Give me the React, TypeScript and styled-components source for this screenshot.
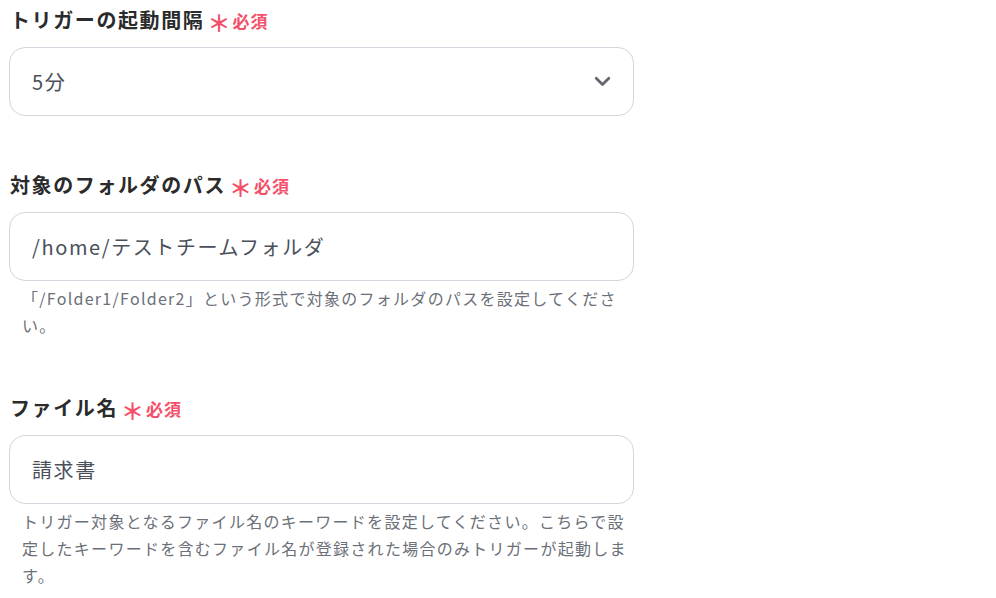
import React from "react";
import styled, { createGlobalStyle } from "styled-components";

const Global = createGlobalStyle`
  html, body { margin: 0; padding: 0; background: #ffffff; }
  body { font-family: "Noto Sans CJK JP", "Noto Sans", sans-serif; }
`;

const Form = styled.div`
  display: flex;
  flex-direction: column;
  gap: 54px;
  padding: 5px 0 0 9px;
  width: 625px;
`;

const Field = styled.div`
  display: flex;
  flex-direction: column;
`;

const Label = styled.div`
  display: flex;
  align-items: center;
  height: 28px;
  margin-bottom: 14px;
  padding-left: 1px;
  font-size: 20px;
  font-weight: 700;
  letter-spacing: 0.08em;
  color: #2b2b2b;
`;

const Asterisk = styled.span`
  color: #f4506a;
  font-family: "Noto Sans CJK JP", sans-serif;
  font-size: 23px;
  font-weight: 700;
  letter-spacing: 0;
  line-height: 1;
  margin: 0 2px 0 3px;
  transform: translateY(3px);
`;

const Required = styled.span`
  color: #f4506a;
  font-size: 17px;
  font-weight: 700;
  letter-spacing: 0.06em;
  transform: translateY(1px);
`;

const Box = styled.div`
  box-sizing: border-box;
  height: 69px;
  display: flex;
  align-items: center;
  justify-content: space-between;
  padding: 0 22px 0 22px;
  border: 1px solid #d3d6dc;
  border-radius: 16px;
  background: #fff;
  font-size: 20px;
  letter-spacing: 0.08em;
  color: #4a505a;
`;

const Help = styled.div`
  margin-top: 4px;
  padding-left: 13px;
  font-size: 16px;
  line-height: 27px;
  letter-spacing: 0.08em;
  color: #6b7079;
`;

const Chevron = () => (
  <svg width="17" height="11" viewBox="0 0 17 11" fill="none">
    <path d="M2.2 2.2l6.3 6.3 6.3-6.3" stroke="#64686e" strokeWidth="2.8" strokeLinecap="round" strokeLinejoin="round" />
  </svg>
);

const RequiredMark = () => (
  <>
    <Asterisk>＊</Asterisk>
    <Required>必須</Required>
  </>
);

export default function App() {
  return (
    <>
      <Global />
      <Form>
        <Field>
          <Label>
            トリガーの起動間隔
            <RequiredMark />
          </Label>
          <Box>
            <span>5分</span>
            <Chevron />
          </Box>
        </Field>
        <Field>
          <Label>
            対象のフォルダのパス
            <RequiredMark />
          </Label>
          <Box>/home/テストチームフォルダ</Box>
          <Help>「/Folder1/Folder2」という形式で対象のフォルダのパスを設定してください。</Help>
        </Field>
        <Field>
          <Label>
            ファイル名
            <RequiredMark />
          </Label>
          <Box>請求書</Box>
          <Help>
            トリガー対象となるファイル名のキーワードを設定してください。こちらで設定したキーワードを含むファイル名が登録された場合のみトリガーが起動します。
          </Help>
        </Field>
      </Form>
    </>
  );
}
